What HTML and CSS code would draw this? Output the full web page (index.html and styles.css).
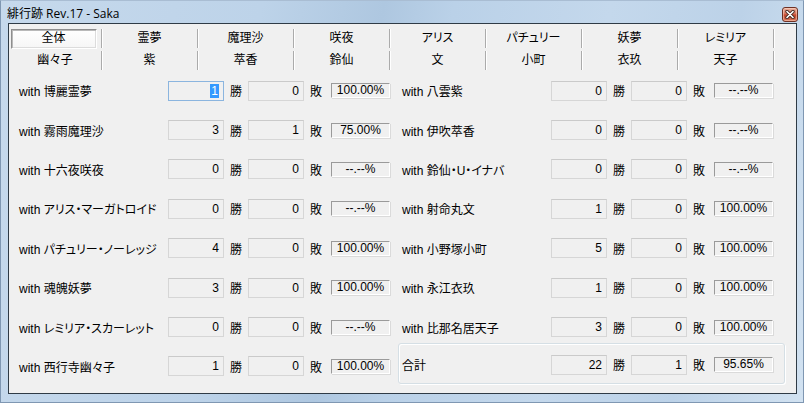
FILE: index.html
```html
<!DOCTYPE html>
<html lang="ja">
<head>
    <meta charset="UTF-8">
    <title>緋行跡 Rev.17 - Saka</title>
    <link rel="stylesheet" href="styles.css">
</head>
<body>
<div class="window">
    <div class="titlebar">
        <span class="title">緋行跡 Rev.17 - Saka</span>
        <span class="close">
            <svg width="10" height="9" viewBox="0 0 10 9">
                <path d="M2 1.5L8 7.5M8 1.5L2 7.5" stroke="#4a2a22" stroke-width="3.4" stroke-linecap="round"/>
                <path d="M2 1.5L8 7.5M8 1.5L2 7.5" stroke="#fff" stroke-width="1.6" stroke-linecap="round"/>
            </svg>
        </span>
    </div>
    <div class="client">
        <div class="tabs">
            <div class="tab on"><span>全体</span></div>
            <div class="tab"><span>霊夢</span></div>
            <div class="tab"><span>魔理沙</span></div>
            <div class="tab"><span>咲夜</span></div>
            <div class="tab"><span>アリス</span></div>
            <div class="tab"><span>パチュリー</span></div>
            <div class="tab"><span>妖夢</span></div>
            <div class="tab"><span>レミリア</span></div>
            <div class="tab"><span>幽々子</span></div>
            <div class="tab"><span>紫</span></div>
            <div class="tab"><span>萃香</span></div>
            <div class="tab"><span>鈴仙</span></div>
            <div class="tab"><span>文</span></div>
            <div class="tab"><span>小町</span></div>
            <div class="tab"><span>衣玖</span></div>
            <div class="tab"><span>天子</span></div>
        </div>

        <div class="stats">
            <div class="col">
                <div class="row">
                    <span class="name">with 博麗霊夢</span>
                    <span class="num focus"><span class="sel">1</span></span>
                    <span class="unit">勝</span>
                    <span class="num">0</span>
                    <span class="unit lose">敗</span>
                    <span class="pct">100.00%</span>
                </div>
                <div class="row">
                    <span class="name">with 霧雨魔理沙</span>
                    <span class="num">3</span>
                    <span class="unit">勝</span>
                    <span class="num">1</span>
                    <span class="unit lose">敗</span>
                    <span class="pct">75.00%</span>
                </div>
                <div class="row">
                    <span class="name">with 十六夜咲夜</span>
                    <span class="num">0</span>
                    <span class="unit">勝</span>
                    <span class="num">0</span>
                    <span class="unit lose">敗</span>
                    <span class="pct">--.--%</span>
                </div>
                <div class="row">
                    <span class="name">with アリス・マーガトロイド</span>
                    <span class="num">0</span>
                    <span class="unit">勝</span>
                    <span class="num">0</span>
                    <span class="unit lose">敗</span>
                    <span class="pct">--.--%</span>
                </div>
                <div class="row">
                    <span class="name">with パチュリー・ノーレッジ</span>
                    <span class="num">4</span>
                    <span class="unit">勝</span>
                    <span class="num">0</span>
                    <span class="unit lose">敗</span>
                    <span class="pct">100.00%</span>
                </div>
                <div class="row">
                    <span class="name">with 魂魄妖夢</span>
                    <span class="num">3</span>
                    <span class="unit">勝</span>
                    <span class="num">0</span>
                    <span class="unit lose">敗</span>
                    <span class="pct">100.00%</span>
                </div>
                <div class="row">
                    <span class="name">with レミリア・スカーレット</span>
                    <span class="num">0</span>
                    <span class="unit">勝</span>
                    <span class="num">0</span>
                    <span class="unit lose">敗</span>
                    <span class="pct">--.--%</span>
                </div>
                <div class="row">
                    <span class="name">with 西行寺幽々子</span>
                    <span class="num">1</span>
                    <span class="unit">勝</span>
                    <span class="num">0</span>
                    <span class="unit lose">敗</span>
                    <span class="pct">100.00%</span>
                </div>
            </div>

            <div class="col">
                <div class="row">
                    <span class="name">with 八雲紫</span>
                    <span class="num">0</span>
                    <span class="unit">勝</span>
                    <span class="num">0</span>
                    <span class="unit lose">敗</span>
                    <span class="pct">--.--%</span>
                </div>
                <div class="row">
                    <span class="name">with 伊吹萃香</span>
                    <span class="num">0</span>
                    <span class="unit">勝</span>
                    <span class="num">0</span>
                    <span class="unit lose">敗</span>
                    <span class="pct">--.--%</span>
                </div>
                <div class="row">
                    <span class="name">with 鈴仙・U・イナバ</span>
                    <span class="num">0</span>
                    <span class="unit">勝</span>
                    <span class="num">0</span>
                    <span class="unit lose">敗</span>
                    <span class="pct">--.--%</span>
                </div>
                <div class="row">
                    <span class="name">with 射命丸文</span>
                    <span class="num">1</span>
                    <span class="unit">勝</span>
                    <span class="num">0</span>
                    <span class="unit lose">敗</span>
                    <span class="pct">100.00%</span>
                </div>
                <div class="row">
                    <span class="name">with 小野塚小町</span>
                    <span class="num">5</span>
                    <span class="unit">勝</span>
                    <span class="num">0</span>
                    <span class="unit lose">敗</span>
                    <span class="pct">100.00%</span>
                </div>
                <div class="row">
                    <span class="name">with 永江衣玖</span>
                    <span class="num">1</span>
                    <span class="unit">勝</span>
                    <span class="num">0</span>
                    <span class="unit lose">敗</span>
                    <span class="pct">100.00%</span>
                </div>
                <div class="row">
                    <span class="name">with 比那名居天子</span>
                    <span class="num">3</span>
                    <span class="unit">勝</span>
                    <span class="num">0</span>
                    <span class="unit lose">敗</span>
                    <span class="pct">100.00%</span>
                </div>
                <div class="row total">
                    <span class="name">合計</span>
                    <span class="num">22</span>
                    <span class="unit">勝</span>
                    <span class="num">1</span>
                    <span class="unit lose">敗</span>
                    <span class="pct">95.65%</span>
                </div>
            </div>
        </div>
    </div>
</div>
</body>
</html>
```

FILE: styles.css
```css
html, body {
    margin: 0;
    padding: 0;
}
body {
    width: 804px;
    height: 403px;
    font-family: "Liberation Sans", "Noto Sans CJK JP", sans-serif;
    font-size: 12px;
    font-feature-settings: "palt";
    color: #000;
}
.window {
    box-sizing: border-box;
    width: 804px;
    height: 403px;
    padding: 0 6px 9px 7px;
    border: 1px solid #7f97b2;
    border-top-color: #a9bdd3;
    background: linear-gradient(100deg, #c6d9ec 0%, #bdd3e9 30%, #aec7e0 44%, #bad1e8 52%, #c4d8ec 70%, #bcd2e8 85%, #d2e2f1 100%);
}
/*タイトルバー*/
.titlebar {
    height: 22px;
    display: flex;
    align-items: center;
    justify-content: space-between;
}
.title {
    font-family: "Open Sans", "Noto Sans CJK JP", sans-serif;
    font-size: 12px;
    padding-top: 2px;
    margin-left: -1px;
}
.close {
    width: 16px;
    height: 15px;
    box-sizing: border-box;
    margin-top: 5px;
    margin-right: -1px;
    border: 1px solid #6e3024;
    border-radius: 3px;
    display: flex;
    align-items: center;
    justify-content: center;
    background: linear-gradient(#eab3a2, #d66d55 48%, #c4432b 52%, #d9775a);
    box-shadow: inset 0 0 0 1px rgba(255, 220, 200, .5);
}
/*クライアント領域*/
.client {
    box-sizing: border-box;
    height: 371px;
    border: 1px solid #2f3b46;
    background-color: #f0f0f0;
}
/*タブ*/
.tabs {
    display: grid;
    grid-template-columns: 93px repeat(7, 96px);
    grid-auto-rows: 19px;
    row-gap: 3px;
    margin-top: 5px;
}
.tab {
    display: flex;
    align-items: center;
    justify-content: center;
    border-right: 1px solid #ababab;
    box-shadow: 1px 0 0 #fff;
}
.tab span {
    line-height: 19px;
}
.tab.on span {
    box-sizing: border-box;
    width: 86px;
    height: 20px;
    margin-left: -3px;
    text-align: center;
    line-height: 17px;
    border: 1px solid;
    border-color: #8e8e8e #fff #fff #8e8e8e;
    box-shadow: inset 1px 1px 0 #b9b9b9, inset -1px -1px 0 #dcdcdc;
    background: linear-gradient(#fff, #f6f6f6);
}
/*戦績*/
.stats {
    display: flex;
    padding-left: 10px;
    margin-top: 1px;
}
.col {
    width: 383px;
}
.row {
    display: flex;
    align-items: center;
    height: 39.4px;
}
.name {
    width: 149px;
    white-space: nowrap;
}
.num {
    box-sizing: border-box;
    width: 56px;
    height: 20px;
    line-height: 18px;
    padding-right: 4px;
    text-align: right;
    border: 1px solid #d6d6d6;
    border-top-color: #cacaca;
}
.num.focus {
    border-color: #8bb5df;
}
.sel {
    display: inline-block;
    background-color: #3399ff;
    color: #fff;
    line-height: 14px;
    padding: 0 1px;
}
.unit {
    box-sizing: border-box;
    width: 24px;
    padding-left: 6px;
}
.unit.lose {
    width: 27px;
}
.pct {
    box-sizing: border-box;
    width: 59px;
    height: 15px;
    line-height: 13px;
    text-align: center;
    border: 1px solid;
    border-color: #9a9a9a #fff #fff #9a9a9a;
    box-shadow: 1px 1px 0 #dadada;
}
/*合計*/
.row.total {
    box-sizing: border-box;
    width: 387px;
    height: 41px;
    margin: -4px 0 0 -4px;
    padding: 3px 0 0 3px;
    border: 1px solid #d5dfe5;
    border-radius: 3px;
    box-shadow: inset 1px 1px 0 #fff, 1px 1px 0 #fff;
}
```
